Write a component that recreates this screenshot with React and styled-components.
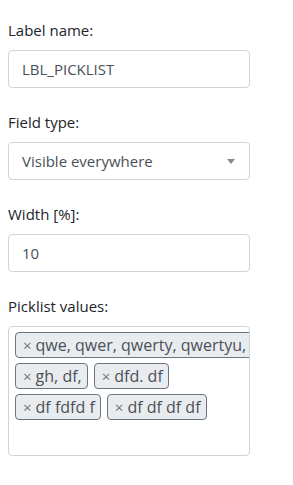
import React from "react";
import styled, { createGlobalStyle } from "styled-components";

const Global = createGlobalStyle`
  html, body { margin: 0; padding: 0; background: #fff; }
  body {
    font-family: "Open Sans", "Noto Sans", Arial, sans-serif;
    font-size: 15px;
    color: #212529;
  }
  * { box-sizing: border-box; }
`;

const Form = styled.form`
  width: 258px;
  padding: 18px 8px 0 8px;
  display: flex;
  flex-direction: column;
  gap: 22px;
`;

const Group = styled.div`
  display: flex;
  flex-direction: column;
  gap: 8px;
`;

const Label = styled.label`
  display: block;
  line-height: 24px;
  color: #212529;
  font-size: 15px;
`;

const Control = styled.div`
  height: 38px;
  border: 1px solid #ced4da;
  border-radius: 4px;
  background: #fff;
  color: #495057;
  font-size: 15px;
  line-height: 24px;
  padding: 6px 12px 6px 13px;
  display: flex;
  align-items: center;
  justify-content: space-between;
`;

const Caret = styled.span`
  width: 0;
  height: 0;
  border-left: 4px solid transparent;
  border-right: 4px solid transparent;
  border-top: 5px solid #888;
  margin-right: 2px;
`;

const MultiBox = styled.div`
  height: 130px;
  border: 1px solid #ced4da;
  border-radius: 4px;
  background: #fff;
  padding: 5px 0 0 6px;
  overflow: hidden;
  display: flex;
  flex-direction: column;
  gap: 5px;
`;

const TagRow = styled.div`
  display: flex;
  gap: 6px;
`;

const Tag = styled.span`
  display: inline-flex;
  align-items: center;
  flex-shrink: 0;
  height: 26px;
  border: 1px solid #6c757d;
  border-radius: 4px;
  background: #e9ecef;
  color: #495057;
  font-size: 16px;
  white-space: nowrap;
  padding: 0 5px 0 7px;
`;

const Remove = styled.span`
  color: #6c757d;
  font-size: 15px;
  margin-right: 4px;
`;

function Chip({ children }) {
  return (
    <Tag>
      <Remove>×</Remove>
      {children}
    </Tag>
  );
}

export default function App() {
  return (
    <>
      <Global />
      <Form>
        <Group>
          <Label>Label name:</Label>
          <Control>LBL_PICKLIST</Control>
        </Group>
        <Group>
          <Label>Field type:</Label>
          <Control>
            <span>Visible everywhere</span>
            <Caret />
          </Control>
        </Group>
        <Group>
          <Label>Width [%]:</Label>
          <Control>10</Control>
        </Group>
        <Group>
          <Label>Picklist values:</Label>
          <MultiBox>
            <TagRow>
              <Chip>qwe, qwer, qwerty, qwertyu, asdf, asdfg</Chip>
            </TagRow>
            <TagRow>
              <Chip>gh, df,</Chip>
              <Chip>dfd. df</Chip>
            </TagRow>
            <TagRow>
              <Chip>df fdfd f</Chip>
              <Chip>df df df df</Chip>
            </TagRow>
          </MultiBox>
        </Group>
      </Form>
    </>
  );
}
